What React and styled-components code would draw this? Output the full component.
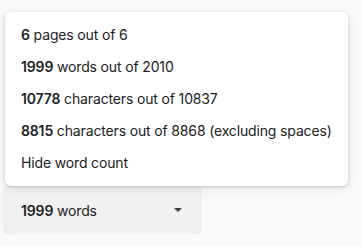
import React from 'react';
import styled, { createGlobalStyle } from 'styled-components';

const GlobalStyle = createGlobalStyle`
  html, body {
    margin: 0;
    padding: 0;
    background: #f8f9fa;
    font-family: Inter, Roboto, "Liberation Sans", sans-serif;
    color: #202124;
  }
`

const stats = [
    { value: '6', label: 'pages out of 6' },
    { value: '1999', label: 'words out of 2010' },
    { value: '10778', label: 'characters out of 10837' },
    { value: '8815', label: 'characters out of 8868 (excluding spaces)' },
]

const App = () => {
    return (
        <>
            <GlobalStyle />
            <Page>
                <Menu>
                    {stats.map((stat) => (
                        <MenuItem key={stat.value}>
                            <span><b>{stat.value}</b> {stat.label}</span>
                        </MenuItem>
                    ))}
                    <MenuItem>Hide word count</MenuItem>
                </Menu>
                <CountButton>
                    <span><b>1999</b> words</span>
                    <svg width="8" height="4" viewBox="0 0 8 4">
                        <path d="M0 0 L8 0 L4 4 Z" fill="#3c4043" />
                    </svg>
                </CountButton>
            </Page>
        </>
    )
}

const Page = styled.div`
    display: flex;
    flex-direction: column;
    align-items: flex-start;
    padding: 12px 0 0 5px;
`

const Menu = styled.div`
    position: relative;
    z-index: 2;
    width: 343px;
    box-sizing: border-box;
    padding: 6px 0 8px;
    background: #fff;
    border-radius: 6px;
    box-shadow: 0 1px 3px rgba(60, 64, 67, 0.2), 0 2px 8px rgba(60, 64, 67, 0.12);
`

const MenuItem = styled.div`
    height: 32px;
    display: flex;
    align-items: center;
    padding: 0 16px;
    font-size: 14px;
    letter-spacing: -0.15px;
    white-space: nowrap;
    b {
        font-weight: 600;
    }
`

const CountButton = styled.div`
    width: 195px;
    height: 48px;
    box-sizing: border-box;
    padding: 0 18px 0 16px;
    display: flex;
    align-items: center;
    justify-content: space-between;
    background: #f1f1f1;
    border-radius: 0 0 6px 6px;
    box-shadow: 0 1px 3px rgba(60, 64, 67, 0.2);
    font-size: 14px;
    letter-spacing: -0.15px;
    b {
        font-weight: 600;
    }
`

export default App
